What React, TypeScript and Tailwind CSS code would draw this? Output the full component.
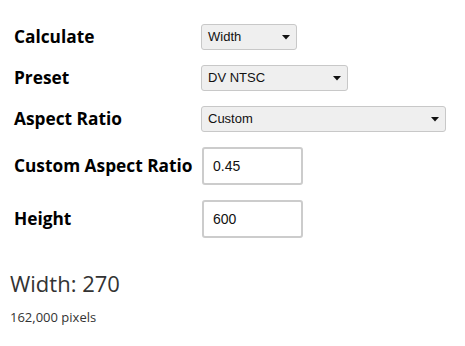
function Select({ value, width }: { value: string; width: string }) {
  return (
    <div
      className={`${width} h-[26px] flex items-center justify-between rounded-[3px] border border-[#c8c8c8] bg-[#efefef] pl-[6px] pr-[6px] text-[13px] text-[#111] font-['Liberation_Sans',Arial,sans-serif]`}
    >
      <span>{value}</span>
      <svg width="8" height="5" viewBox="0 0 8 5">
        <path d="M0 0 L8 0 L4 4.5 Z" fill="#111" />
      </svg>
    </div>
  );
}

function Input({ value }: { value: string }) {
  return (
    <div className="w-[101px] h-[38px] ml-[1px] flex items-center rounded-[3px] border-2 border-[#cccccc] bg-white pl-[9px] text-[14px] text-[#111] font-['Liberation_Sans',Arial,sans-serif]">
      {value}
    </div>
  );
}

export default function App() {
  const rows: { label: string; control: React.ReactNode }[] = [
    { label: 'Calculate', control: <Select value="Width" width="w-[96px]" /> },
    { label: 'Preset', control: <Select value="DV NTSC" width="w-[147px]" /> },
    { label: 'Aspect Ratio', control: <Select value="Custom" width="w-[245px]" /> },
    { label: 'Custom Aspect Ratio', control: <Input value="0.45" /> },
    { label: 'Height', control: <Input value="600" /> },
  ];

  return (
    <div className="min-h-screen bg-white font-['Open_Sans',sans-serif] text-[#222]">
      <div className="pt-[24px] pl-[14px] grid grid-cols-[187px_auto] gap-y-[15px] items-center">
        {rows.map((r) => (
          <div key={r.label} className="contents">
            <div className="text-[17.3px] font-bold text-black leading-none">{r.label}</div>
            <div className="flex">{r.control}</div>
          </div>
        ))}
      </div>

      <div className="pl-[10px] pt-[34px]">
        <div className="text-[22px] text-[#333] leading-none">Width: 270</div>
        <div className="mt-[17px] text-[13px] text-[#333] leading-none">162,000 pixels</div>
      </div>
    </div>
  );
}
